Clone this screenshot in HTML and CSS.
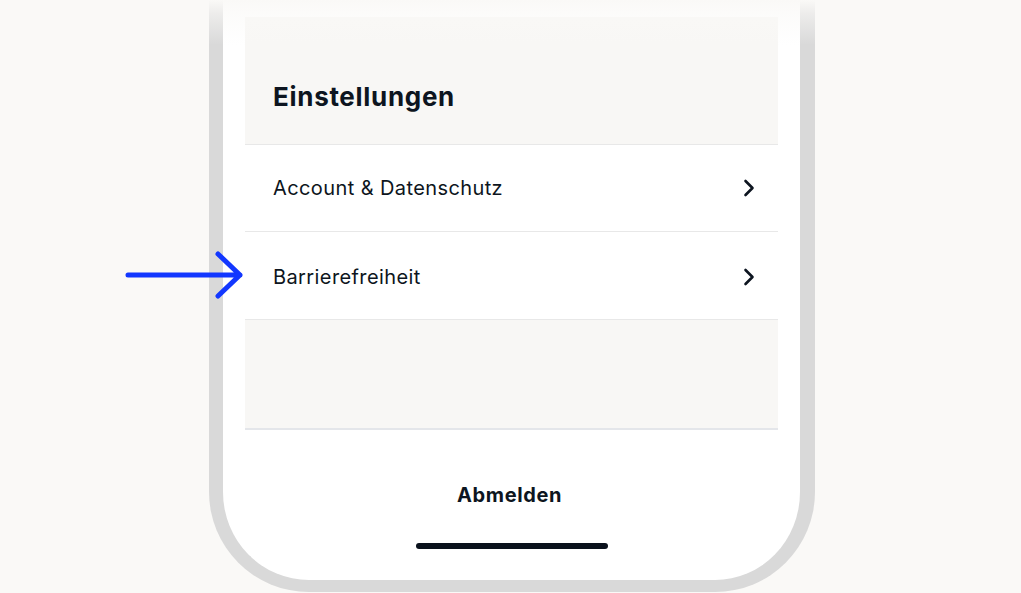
FILE: index.html
```html
<!DOCTYPE html>
<html lang="de">
<head>
<meta charset="utf-8">
<title>Einstellungen</title>
<link rel="stylesheet" href="styles.css">
</head>
<body>
<div class="stage">
  <div class="phone">
    <div class="screen">
      <div class="header">
        <h1 class="title">Einstellungen</h1>
      </div>
      <div class="row">
        <span class="row-label">Account &amp; Datenschutz</span>
        <svg class="chev" width="12" height="18" viewBox="0 0 12 18"><path d="M2.5 2 L9.5 9 L2.5 16" fill="none" stroke="#0d1520" stroke-width="2.6" stroke-linecap="round" stroke-linejoin="round"/></svg>
      </div>
      <div class="row row-tall">
        <span class="row-label">Barrierefreiheit</span>
        <svg class="chev" width="12" height="18" viewBox="0 0 12 18"><path d="M2.5 2 L9.5 9 L2.5 16" fill="none" stroke="#0d1520" stroke-width="2.6" stroke-linecap="round" stroke-linejoin="round"/></svg>
      </div>
      <div class="spacer"></div>
      <div class="logout">Abmelden</div>
      <div class="home-bar"></div>
    </div>
  </div>
  <svg class="pointer" width="124" height="52" viewBox="0 0 124 52">
    <path d="M3 25 L115 25 M93 4 L115 25 L93 46" fill="none" stroke="#1237ff" stroke-width="5" stroke-linecap="round" stroke-linejoin="round"/>
  </svg>
  <div class="top-fade"></div>
</div>
</body>
</html>
```
FILE: styles.css
```css
* { box-sizing: border-box; }
html, body { margin: 0; padding: 0; }
body {
  background: #faf9f7;
  font-family: Inter, "Noto Sans", "Liberation Sans", sans-serif;
  color: #0d1520;
  width: 1021px;
  height: 593px;
  overflow: hidden;
}
.stage {
  position: relative;
  width: 1021px;
  height: 593px;
  padding-left: 209px;
}
.phone {
  width: 606px;
  height: 592px;
  border-left: 14px solid #d9d9d9;
  border-right: 15px solid #d9d9d9;
  border-bottom: 12px solid #d9d9d9;
  border-radius: 0 0 100px 100px;
  background: #ffffff;
  overflow: hidden;
}
.screen {
  display: flex;
  flex-direction: column;
  padding: 17px 22px 0;
}
.header {
  background: #f8f7f5;
  padding: 64px 28px 31px;
  border-bottom: 1px solid #e8e8e8;
}
.title {
  margin: 0;
  font-size: 26px;
  line-height: 32px;
  font-weight: 700;
  letter-spacing: 0.7px;
}
.row {
  height: 87px;
  display: flex;
  align-items: center;
  justify-content: space-between;
  padding: 0 23px 0 28px;
  border-bottom: 1px solid #e8e8e8;
}
.row-tall {
  height: 88px;
  padding-top: 2px;
}
.row-label {
  font-size: 20px;
  line-height: 24px;
  font-weight: 400;
  letter-spacing: 0.4px;
}
.chev { display: block; }
.spacer {
  height: 110px;
  background: #f8f7f5;
  border-bottom: 2px solid #e4e6ea;
}
.logout {
  margin-top: 53px;
  padding-right: 4px;
  text-align: center;
  font-size: 20px;
  line-height: 24px;
  font-weight: 700;
  letter-spacing: 0.6px;
}
.home-bar {
  margin: 36px auto 0;
  width: 192px;
  height: 6px;
  border-radius: 3px;
  background: #0a111c;
}
.pointer {
  position: absolute;
  left: 125px;
  top: 250px;
}
.top-fade {
  position: absolute;
  left: 0;
  top: 0;
  width: 1021px;
  height: 45px;
  background: linear-gradient(to bottom, #faf9f7 0%, rgba(250,249,247,0.6) 30%, rgba(250,249,247,0) 100%);
  pointer-events: none;
}
```
